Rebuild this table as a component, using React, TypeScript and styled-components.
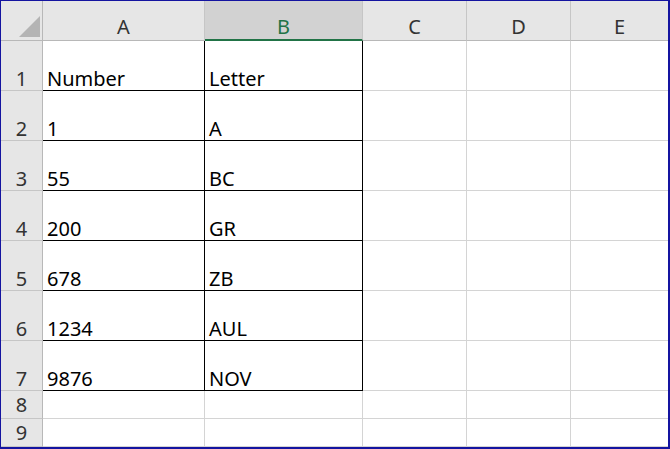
import React from "react";
import styled, { createGlobalStyle, css } from "styled-components";

const Global = createGlobalStyle`
  html, body { margin: 0; padding: 0; background: #ffffff; }
  body { font-family: "Noto Sans", "DejaVu Sans", sans-serif; }
`;

const Frame = styled.div`
  width: 670px;
  height: 449px;
  box-sizing: border-box;
  border-style: solid;
  border-color: #1414a0;
  border-width: 1px 2px 2px 1px;
  overflow: hidden;
  background: #ffffff;
`;

const Sheet = styled.div`
  display: grid;
  grid-template-columns: 42px 162px 158px 104px 104px 97px;
  grid-template-rows: 40px repeat(7, 50px) 28px 28px;
`;

const Corner = styled.div`
  background: #e6e6e6;
  border-right: 1px solid #b8b8b8;
  border-bottom: 1px solid #b8b8b8;
  box-sizing: border-box;
  position: relative;
`;

const Triangle = styled.svg`
  position: absolute;
  left: 18px;
  top: 15px;
`;

const ColHead = styled.div<{ $active?: boolean; $last?: boolean }>`
  box-sizing: border-box;
  background: ${(p) => (p.$active ? "#d2d2d2" : "#e6e6e6")};
  border-right: ${(p) => (p.$last ? "none" : "1px solid #c6c6c6")};
  border-bottom: ${(p) => (p.$active ? "2px solid #217346" : "1px solid #b8b8b8")};
  color: ${(p) => (p.$active ? "#217346" : "#333333")};
  font-size: 20px;
  line-height: 20px;
  display: flex;
  align-items: flex-end;
  justify-content: center;
  padding-bottom: ${(p) => (p.$active ? "2px" : "3px")};
`;

const RowHead = styled.div<{ $short?: boolean }>`
  box-sizing: border-box;
  background: #e6e6e6;
  border-right: 1px solid #b8b8b8;
  border-bottom: 1px solid #c6c6c6;
  color: #333333;
  font-size: 20px;
  line-height: 20px;
  display: flex;
  justify-content: center;
  align-items: ${(p) => (p.$short ? "center" : "flex-end")};
  padding-bottom: ${(p) => (p.$short ? "0" : "1px")};
`;

const Cell = styled.div<{ $boxed?: boolean; $last?: boolean }>`
  box-sizing: border-box;
  border-right: ${(p) => (p.$last ? "none" : "1px solid #d4d4d4")};
  border-bottom: 1px solid #d4d4d4;
  color: #000000;
  font-size: 20px;
  line-height: 20px;
  display: flex;
  align-items: flex-end;
  padding: 0 0 1px 4px;
  white-space: nowrap;
  ${(p) =>
    p.$boxed &&
    css`
      border-right: 1px solid #000000;
      border-bottom: 1px solid #000000;
    `}
`;

const columns = ["A", "B", "C", "D", "E"];
const data: [string, string][] = [
  ["Number", "Letter"],
  ["1", "A"],
  ["55", "BC"],
  ["200", "GR"],
  ["678", "ZB"],
  ["1234", "AUL"],
  ["9876", "NOV"],
];

export default function App() {
  const rows = Array.from({ length: 9 }, (_, i) => i);
  return (
    <>
      <Global />
      <Frame>
        <Sheet>
          <Corner>
            <Triangle width="22" height="22" viewBox="0 0 22 22">
              <polygon points="21,0 21,21 0,21" fill="#b4b4b4" />
            </Triangle>
          </Corner>
          {columns.map((c, i) => (
            <ColHead key={c} $active={c === "B"} $last={i === columns.length - 1}>
              {c}
            </ColHead>
          ))}
          {rows.map((r) => {
            const short = r >= 7;
            const rowData = data[r];
            return (
              <React.Fragment key={r}>
                <RowHead $short={short}>{r + 1}</RowHead>
                {columns.map((c, ci) => (
                  <Cell
                    key={c}
                    $boxed={!short && ci < 2}
                    $last={ci === columns.length - 1}
                  >
                    {rowData && ci < 2 ? rowData[ci] : ""}
                  </Cell>
                ))}
              </React.Fragment>
            );
          })}
        </Sheet>
      </Frame>
    </>
  );
}
